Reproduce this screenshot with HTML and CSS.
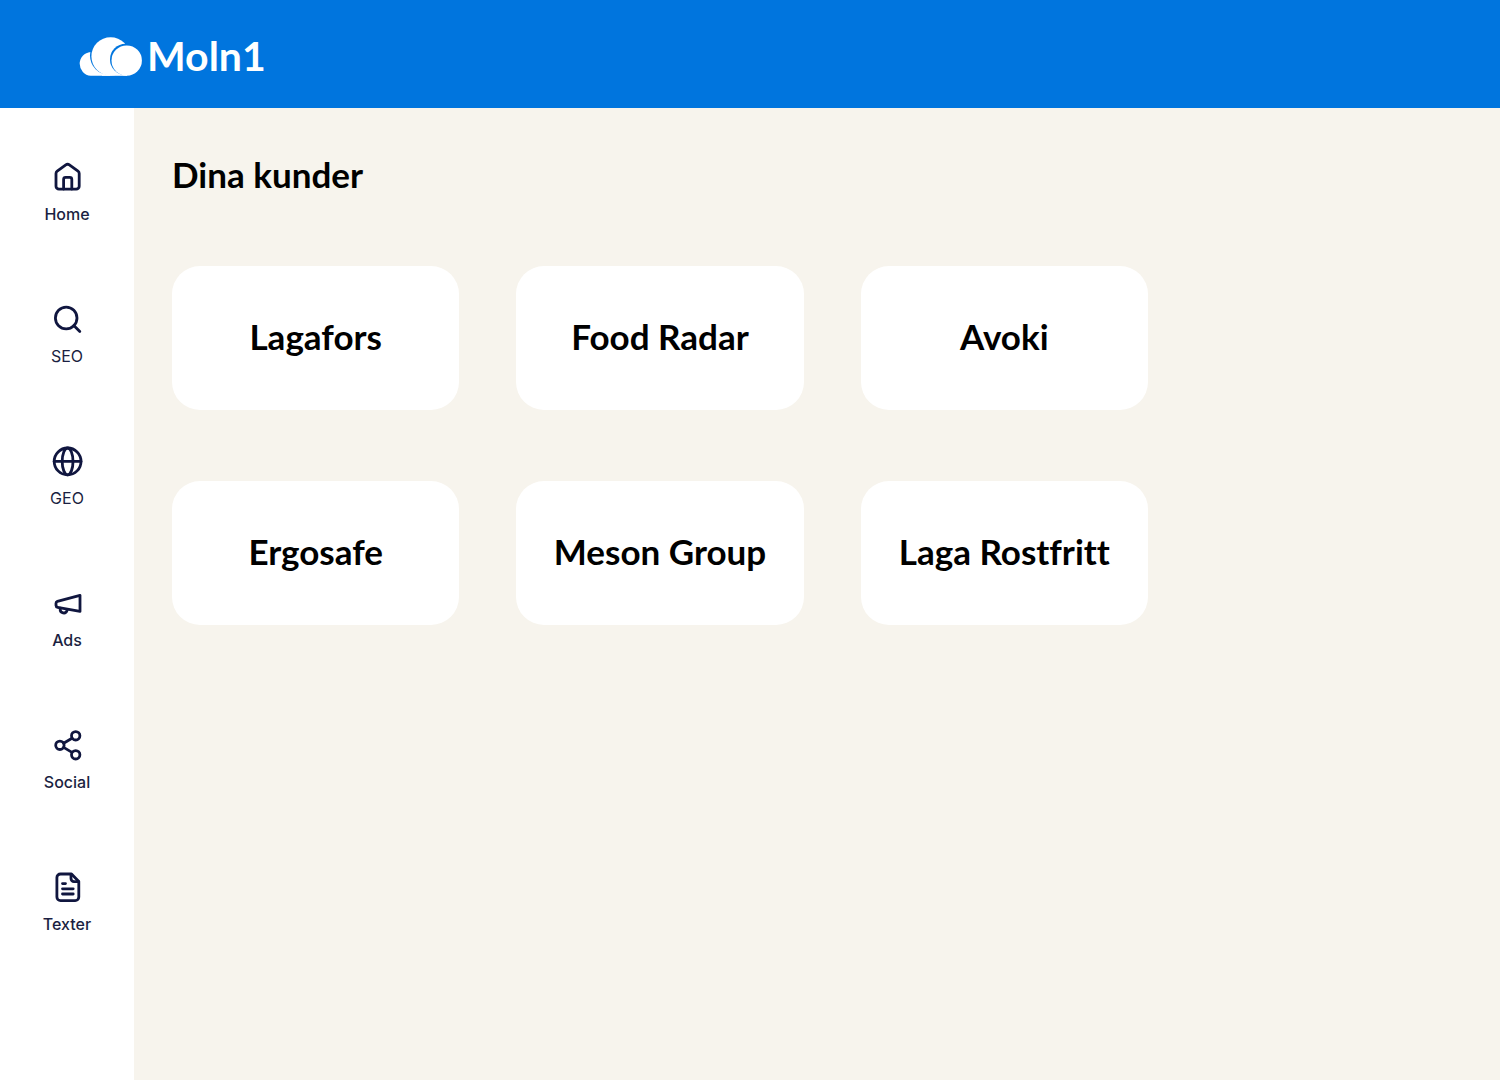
FILE: index.html
```html
<!DOCTYPE html>
<html lang="sv">
<head>
    <meta charset="UTF-8">
    <meta name="viewport" content="width=device-width, initial-scale=1.0">
    <title>Moln1 - Dina kunder</title>
    <link rel="stylesheet" href="styles.css">
</head>
<body>
    <header class="topbar">
        <a href="#" class="logo">
            <svg class="logo-cloud" viewBox="0 0 64 39" aria-hidden="true">
                <path class="cloud" d="M12.6 14.9H32V38.8H12.6A12 12 0 0 1 12.6 14.9Z"/>
                <path class="cloud" d="M24 30H49V38.8H24Z"/>
                <circle class="cloud-gap" cx="31.2" cy="18.6" r="19.2"/>
                <circle class="cloud" cx="32.6" cy="19.4" r="19.2"/>
                <circle class="cloud-gap" cx="47.6" cy="22.4" r="15.6"/>
                <circle class="cloud" cx="48.7" cy="23.6" r="15.2"/>
            </svg>
            <span>Moln1</span>
        </a>
    </header>

    <div class="layout">
        <nav class="sidebar">
            <a href="#" class="nav-item">
                <svg viewBox="0 0 32 32" aria-hidden="true">
                    <path d="M5 11.6a3 3 0 0 1 1.2-2.4l8.6-6.3a3 3 0 0 1 3.6 0l8.6 6.3a3 3 0 0 1 1.2 2.4v12.6a3 3 0 0 1-3 3H8a3 3 0 0 1-3-3Z"/>
                    <path d="M12.6 27V17.4a2 2 0 0 1 2-2h4.2a2 2 0 0 1 2 2V27"/>
                </svg>
                <span>Home</span>
            </a>
            <a href="#" class="nav-item light">
                <svg viewBox="0 0 32 32" aria-hidden="true">
                    <circle cx="15.2" cy="14" r="10.8"/>
                    <path d="M22.8 21.6l6 6"/>
                </svg>
                <span>SEO</span>
            </a>
            <a href="#" class="nav-item light">
                <svg viewBox="0 0 32 32" aria-hidden="true">
                    <circle cx="16.6" cy="15.4" r="13.4"/>
                    <ellipse cx="16.6" cy="15.4" rx="5.4" ry="13.4"/>
                    <path d="M3.2 15.4h26.8"/>
                </svg>
                <span>GEO</span>
            </a>
            <a href="#" class="nav-item">
                <svg viewBox="0 0 32 32" aria-hidden="true">
                    <path d="M29 7.4v16L6.6 19.3A2 2 0 0 1 5 17.4v-2.2a2 2 0 0 1 1.4-1.9Z"/>
                    <path d="M9.2 20.2v1a3.5 3.5 0 0 0 6.8 1.4l.4-1.2"/>
                </svg>
                <span>Ads</span>
            </a>
            <a href="#" class="nav-item">
                <svg viewBox="0 0 32 32" aria-hidden="true">
                    <circle cx="8.9" cy="15.3" r="4.2"/>
                    <circle cx="24.7" cy="5.8" r="4.2"/>
                    <circle cx="24.7" cy="24.8" r="4.2"/>
                    <path d="M12.6 13.2l8.4-5M12.6 17.4l8.4 5"/>
                </svg>
                <span>Social</span>
            </a>
            <a href="#" class="nav-item">
                <svg viewBox="0 0 32 32" aria-hidden="true">
                    <path d="M9.5 2h11l7.3 7.4V25a3.6 3.6 0 0 1-3.6 3.6H9.5A3.6 3.6 0 0 1 5.9 25V5.6A3.6 3.6 0 0 1 9.5 2Z"/>
                    <path d="M20 2.4v4.2a3 3 0 0 0 3 3h4.6M11.5 11.6h3M11.5 16.8h10.7M11.5 22h10.7"/>
                </svg>
                <span>Texter</span>
            </a>
        </nav>

        <main class="content">
            <h1>Dina kunder</h1>
            <div class="customers">
                <a href="#" class="customer">Lagafors</a>
                <a href="#" class="customer">Food Radar</a>
                <a href="#" class="customer">Avoki</a>
                <a href="#" class="customer">Ergosafe</a>
                <a href="#" class="customer">Meson Group</a>
                <a href="#" class="customer">Laga Rostfritt</a>
            </div>
        </main>
    </div>
</body>
</html>
```
FILE: styles.css
```css
* {
    box-sizing: border-box;
}
body {
    margin: 0;
    min-height: 100vh;
    display: flex;
    flex-direction: column; /* Top bar above the rest */
    font-family: Lato, "Liberation Sans", sans-serif;
    font-variant-ligatures: none;
    background-color: #f7f4ed;
    color: #000;
}
a {
    color: inherit;
    text-decoration: none;
}

/* Top bar */
.topbar {
    display: flex;
    align-items: center;
    min-height: 108px;
    padding: 4px 78px 0;
    background-color: #0075de;
}
.logo {
    display: flex;
    align-items: center;
    gap: 5px;
    color: #fff;
    font-size: 41px;
    font-weight: 700;
    line-height: 52px;
}
.logo-cloud {
    width: 64px;
    height: 39px;
}
.cloud {
    fill: #fff;
}
.cloud-gap {
    fill: #0075de;
}

/* Sidebar and content side by side */
.layout {
    display: flex;
    flex: 1;
}
.sidebar {
    display: flex;
    flex-direction: column;
    gap: 80px;
    width: 134px;
    flex-shrink: 0;
    padding: 54px 0;
    background-color: #fff;
}
.nav-item {
    display: flex;
    flex-direction: column;
    align-items: center;
    gap: 10px;
    font-family: Inter, sans-serif;
    font-size: 16px;
    font-weight: 500;
    line-height: 20px;
    color: #1b1f42;
}
.nav-item.light {
    font-weight: 400;
}
.nav-item svg {
    width: 32px;
    height: 32px;
    fill: none;
    stroke: #10163f;
    stroke-width: 2.8;
    stroke-linecap: round;
    stroke-linejoin: round;
}
.content {
    flex: 1;
    padding: 42px 38px;
}
h1 {
    margin: 0 0 68px;
    font-size: 35px;
    font-weight: 700;
    line-height: 48px;
}

/* Customer cards */
.customers {
    display: grid;
    grid-template-columns: repeat(3, 1fr);
    gap: 71px 57px;
    max-width: 976px;
}
.customer {
    display: flex;
    align-items: center;
    justify-content: center;
    min-height: 144px;
    padding-bottom: 4px;
    border-radius: 28px;
    background-color: #fff;
    font-size: 35px;
    font-weight: 700;
    line-height: 48px;
}
```
